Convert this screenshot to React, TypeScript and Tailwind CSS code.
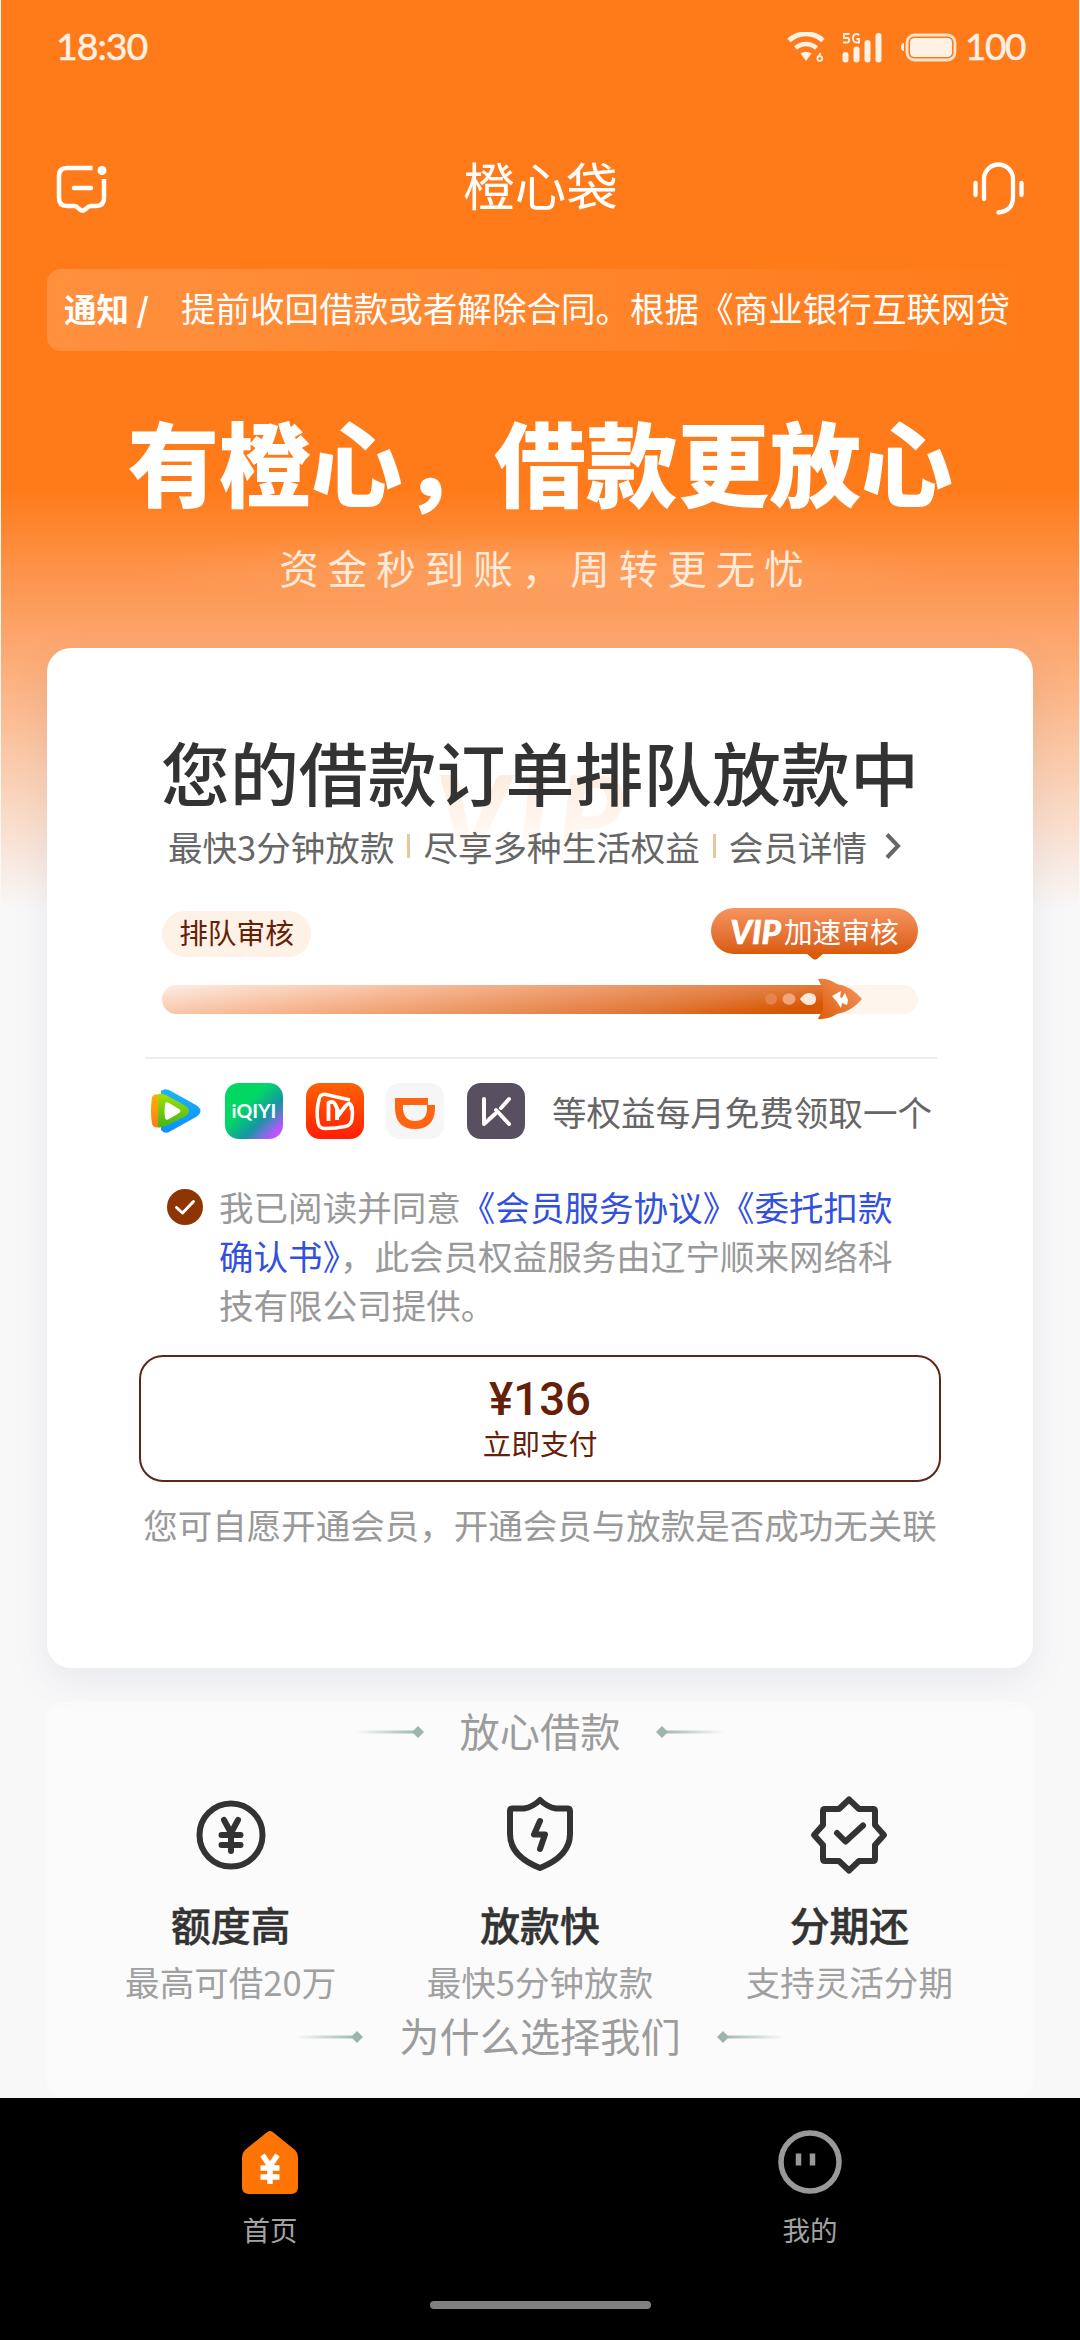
import type { ReactNode } from 'react';

const StatusBar = () => (
  <div className="flex h-[94px] items-center justify-between pl-[55px] pr-[54px] font-['Lato','Noto_Sans_CJK_SC',sans-serif] text-[#fff1e4]">
    <span className="text-[37.500px] leading-[92px] tracking-[-1px] -mt-[2px] [-webkit-text-stroke:0.500px_#fff1e4]">18:30</span>
    <div className="flex items-center">
      <svg width="38" height="30" viewBox="0 0 38 30" fill="none" stroke="#fff1e4">
        <path d="M2 8.500a25 25 0 0 1 34 0" strokeWidth="5" />
        <path d="M8.500 16a15.500 15.500 0 0 1 21 0" strokeWidth="4.500" />
        <path d="M13.500 21.500q5.500-3.500 11 0L19 29z" fill="#fff1e4" stroke="none" />
        <path d="M33.500 21l-2.500 4.500" strokeWidth="1.700" />
        <circle cx="32.800" cy="26.500" r="2.400" strokeWidth="1.700" />
      </svg>
      <svg className="ml-[17px]" width="40" height="31" viewBox="0 0 40 31" fill="#fff1e4">
        <path d="M7.500 2H2v4h3.200q2 0 2 2.200T5 10.500H1M17 3.500Q16.500 2 14.500 2 11 2 11 6.200t3.500 4.300H17V7h-2.500" fill="none" stroke="#fff1e4" strokeWidth="1.900" />
        <rect x="0.500" y="20" width="6" height="10.500" rx="3" />
        <rect x="11.500" y="14.500" width="6" height="16" rx="3" />
        <rect x="22.500" y="8" width="6" height="22.500" rx="3" />
        <rect x="33.500" y="1" width="6" height="29.500" rx="3" />
      </svg>
      <svg className="ml-[19px]" width="56" height="29" viewBox="0 0 56 29">
        <path d="M3 10v8Q0 18 0 14t3-4z" fill="#fff1e4" />
        <rect x="6" y="2" width="48" height="25" rx="7.500" fill="none" stroke="#ffe3cb" strokeWidth="2.800" />
        <rect x="9" y="5" width="42" height="19" rx="4.500" fill="#fff1e4" />
      </svg>
      <span className="-mt-[2px] ml-[8px] text-[37px] leading-[92px] tracking-[-1.500px] [-webkit-text-stroke:0.500px_#fff1e4]">100</span>
    </div>
  </div>
);

const TopBar = () => (
  <div className="flex h-[184px] items-center justify-between pt-[3px] pl-[54px] pr-[53px] text-white">
    <svg width="54" height="54" viewBox="0 0 54 54" fill="none" stroke="white" strokeWidth="4.500" strokeLinecap="round" strokeLinejoin="round">
      <path d="M37.500 7H12q-8 0-8 8v22q0 8 8 8h7q2.500 0 4 2l2 1.500q2.500 2.500 5 0l2-1.500q1.500-2 4-2h5q8 0 8-8V18" strokeLinecap="butt" />
      <path d="M19 27h17" />
      <circle cx="47" cy="9.500" r="4.500" fill="white" stroke="none" />
    </svg>
    <h1 className="mb-[8px] text-[51.500px] leading-[74px]">橙心袋</h1>
    <svg width="54" height="58" viewBox="0 0 54 58" fill="none" stroke="white" strokeWidth="4.300" strokeLinecap="round">
      <path d="M12 40V20a14.500 14.500 0 0 1 29 0v18q0 14-14.500 15.500M3.500 24v12M49.500 24v12" />
    </svg>
  </div>
);

const Notice = () => (
  <div className="mx-[46px] -mt-[9px] flex h-[82px] items-center overflow-hidden rounded-[14px] bg-linear-to-r from-white/16 to-white/0 pb-[4px] pl-[17px] whitespace-nowrap text-white">
    <span className="text-[32.500px] font-bold">通知 /</span>
    <span className="ml-[32px] text-[34.560px]">提前收回借款或者解除合同。根据《商业银行互联网贷</span>
  </div>
);

const Rocket = () => (
  <svg className="absolute top-[-8px] left-[598px]" width="104" height="44" viewBox="0 0 104 44">
    <defs>
      <linearGradient id="rocket" x1="0" y1="1" x2="1" y2="0">
        <stop offset="0" stopColor="#dd5f0c" />
        <stop offset="1" stopColor="#f59761" />
      </linearGradient>
    </defs>
    <ellipse cx="11" cy="22" rx="6" ry="5.500" fill="#e5854b" />
    <ellipse cx="29" cy="22" rx="6.500" ry="5.800" fill="#f0a67c" />
    <path d="M40 22q4-6 9-6 7 0 7 6t-7 6q-5 0-9-6z" fill="#fde9db" />
    <path d="M58 2q10-1 19 5 14 2 25 15-11 13-25 15-9 6-19 5 2-5 5-8V10q-3-3-5-8z" fill="url(#rocket)" />
    <path d="M72 19l9-5-1 6 2 1 3-5 3 7-1 5-5-2-1 5-4-6z" fill="white" />
  </svg>
);

const Progress = () => (
  <div className="relative mt-[28px] ml-[115px] h-[29px] w-[756px] rounded-full bg-[#fef5ec]">
    <div className="h-full w-[662px] rounded-l-full bg-[linear-gradient(172deg,#fdeee4_0%,#f6b590_35%,#e27a3c_75%,#d75803_92%)]" />
    <Rocket />
  </div>
);

const Apps = () => (
  <div className="flex h-[58px] items-center">
    <svg className="relative left-[2px]" width="58" height="58" viewBox="0 0 58 58">
      <defs>
        <linearGradient id="tv1" x1="0" y1="0" x2="0" y2="1"><stop stopColor="#1bb4fb" /><stop offset="1" stopColor="#0e8dff" /></linearGradient>
        <linearGradient id="tv2" x1="0" y1="0" x2="0" y2="1"><stop stopColor="#ffb102" /><stop offset="1" stopColor="#fb7c1a" /></linearGradient>
        <linearGradient id="tv3" x1="0" y1="0" x2="0" y2="1"><stop stopColor="#a5e000" /><stop offset="1" stopColor="#41b51e" /></linearGradient>
      </defs>
      <path d="M14 9q3-3 8-1l27 15q9 6 0 12L22 50q-5 2-8-2z" fill="url(#tv1)" />
      <path d="M5 15q3-5 9-1v31q-7 2-9-3-2-13 0-27z" fill="url(#tv2)" />
      <path d="M11 12q4-1 8 1l20 11q6 5 0 10L19 44q-4 2-8 1z" fill="url(#tv3)" />
      <path d="M18 22q1-3 4-1l10 6q3 2 0 4l-10 6q-3 2-4-1-1-7 0-14z" fill="white" />
    </svg>
    <div className="ml-[22px] flex h-[56px] w-[58px] items-center justify-center rounded-[14px] bg-[linear-gradient(135deg,#00d95f_0%,#00d865_38%,#1696a5_65%,#bb55ff_88%)] font-['Lato',sans-serif] text-[19.500px] font-bold text-white">
      iQIYI
    </div>
    <svg className="ml-[23px]" width="58" height="56" viewBox="0 0 58 56" fill="none" stroke="white">
      <defs>
        <linearGradient id="mg" x1="0" y1="0" x2="0" y2="1"><stop stopColor="#ff6200" /><stop offset="1" stopColor="#ff1e05" /></linearGradient>
      </defs>
      <rect width="58" height="56" rx="14" fill="url(#mg)" stroke="none" />
      <path d="M44 17L20 11.500q-6-1-7 5-3 11-1 23 1 6 7 6 11 0 20-2 6-1 7-7 1-6 0-13" strokeWidth="3.500" />
      <path d="M22.500 38V20q5-3 7 2l4 9 6-8q5-5 6 1v3M31 37V24" strokeWidth="3.800" />
    </svg>
    <svg className="ml-[22px]" width="58" height="56" viewBox="0 0 58 56">
      <rect width="58" height="56" rx="14" fill="#f7f6f6" />
      <path d="M9 15h33v7h7v4q-1 20-20 20T9 26zM17 22v4q1 12 12 12t12-11v-5z" fill="#ff6413" fillRule="evenodd" />
    </svg>
    <svg className="ml-[23px]" width="58" height="56" viewBox="0 0 58 56" fill="none" stroke="white" strokeWidth="4" strokeLinecap="round">
      <rect width="58" height="56" rx="14" fill="#584f60" stroke="none" />
      <path d="M17 16v25l11-10M34 25l8-9M42 41L29 27" strokeLinejoin="round" />
    </svg>
    <span className="ml-[27px] text-[34.560px] leading-[50px] whitespace-nowrap text-[#666]">等权益每月免费领取一个</span>
  </div>
);

const LoanCard = () => (
  <div className="relative mx-[46px] h-[1020px] rounded-[24px] bg-white pt-[88px] shadow-[0_12px_36px_rgba(90,100,140,0.10)]">
    <div className="absolute top-[116px] left-[388px] bg-linear-to-b from-[#fdeadb] via-[#fff4ec] to-white bg-clip-text pr-[20px] font-['Lato',sans-serif] text-[112px] leading-[100px] font-black tracking-[8px] text-transparent italic">
      VIP
    </div>
    <div className="relative">
      <h2 className="ml-[114px] text-[68.900px] leading-[70px] font-medium whitespace-nowrap text-[#333]">您的借款订单排队放款中</h2>
      <div className="mt-[15px] ml-[121px] flex h-[50px] items-center text-[34.560px] leading-[50px] whitespace-nowrap text-[#666]">
        <span>最快3分钟放款</span>
        <i className="mx-[13px] h-[24px] w-[3px] bg-[#eac6a0]" />
        <span>尽享多种生活权益</span>
        <i className="mx-[13px] h-[24px] w-[3px] bg-[#eac6a0]" />
        <span>会员详情</span>
        <svg className="ml-[17px]" width="18" height="26" viewBox="0 0 18 26" fill="none" stroke="#666" strokeWidth="4">
          <path d="M3 1.500L14 13 3 24.500" />
        </svg>
      </div>
      <div className="mt-[37px] mr-[115px] ml-[115px] flex items-start justify-between">
        <div className="mt-[3px] h-[46px] w-[149px] rounded-full bg-[#fef1e6] text-center text-[28.700px] leading-[42px] text-[#642108]">排队审核</div>
        <div className="relative flex h-[46px] w-[207px] items-center justify-center rounded-full bg-linear-to-b from-[#f5955e] to-[#da5a05] text-white">
          <span className="mr-[3px] font-['Lato',sans-serif] text-[33px] leading-[46px] font-black italic [-webkit-text-stroke:0.600px_white]">VIP</span>
          <span className="text-[28.700px] leading-[44px]">加速审核</span>
          <svg className="absolute top-[45px] left-[95px]" width="18" height="7" viewBox="0 0 18 7">
            <path d="M0 0h18l-7 6q-2 1-4 0z" fill="#da5a05" />
          </svg>
        </div>
      </div>
      <Progress />
      <div className="mt-[43px] ml-[98px] h-[2px] w-[792px] bg-[#ededed]" />
      <div className="mt-[23px] ml-[98px]">
        <Apps />
      </div>
      <div className="mt-[42px] ml-[120px] flex">
        <svg className="mt-[7px]" width="36" height="36" viewBox="0 0 36 36">
          <circle cx="18" cy="18" r="18" fill="#8f3503" />
          <path d="M9.500 18.500l6 5.500 11-11.500" fill="none" stroke="white" strokeWidth="3" strokeLinecap="round" strokeLinejoin="round" />
        </svg>
        <p className="ml-[16px] w-[676px] text-[34.560px] leading-[49px] text-[#999]">
          我已阅读并同意<span className="text-[#3350dc]">《会员服务协议》《委托扣款确认书》</span>，此会员权益服务由辽宁顺来网络科技有限公司提供。
        </p>
      </div>
      <button className="mt-[26px] ml-[92px] flex h-[127px] w-[802px] flex-col items-center rounded-[24px] border-2 border-[#5f2613] pt-[18px] text-[#642108]">
        <span className="font-['Roboto',sans-serif] text-[45.500px] leading-[50px] font-medium">¥136</span>
        <span className="text-[28.700px] leading-[36px]">立即支付</span>
      </button>
      <p className="mt-[17px] text-center text-[34.500px] leading-[50px] whitespace-nowrap text-[#999]">您可自愿开通会员，开通会员与放款是否成功无关联</p>
    </div>
  </div>
);

const SectionTitle = ({ children }: { children: ReactNode }) => (
  <div className="flex h-[60px] items-center justify-center gap-[35px]">
    <svg width="69" height="14" viewBox="0 0 69 14">
      <defs>
        <linearGradient id="tail"><stop stopColor="#9db5ae" stopOpacity="0" /><stop offset="1" stopColor="#9db5ae" /></linearGradient>
      </defs>
      <rect y="5.500" width="62" height="3" fill="url(#tail)" />
      <path d="M62 1l6 6-6 6-6-6z" fill="#9db5ae" />
    </svg>
    <span className="mb-[4px] text-[40.200px] leading-[56px] text-[#9c9c9c]">{children}</span>
    <svg className="-scale-x-100" width="69" height="14" viewBox="0 0 69 14">
      <rect y="5.500" width="62" height="3" fill="url(#tail)" />
      <path d="M62 1l6 6-6 6-6-6z" fill="#9db5ae" />
    </svg>
  </div>
);

const features = [
  {
    title: '额度高',
    desc: '最高可借20万',
    icon: (
      <>
        <circle cx="40" cy="40" r="31.500" strokeWidth="6" />
        <path d="M33 25l7 13 7-13M40 38v18M30.500 40h19M30.500 50h19" strokeWidth="6" />
      </>
    ),
  },
  {
    title: '放款快',
    desc: '最快5分钟放款',
    icon: (
      <>
        <path d="M40 5q7 7 16 8.500h12q2 0 2 3V39q0 22-30 34Q10 61 10 39V16.500q0-3 2-3h12Q33 12 40 5z" strokeWidth="6" />
        <path d="M40 26l-6 13.500h11L40 54" strokeWidth="6" />
      </>
    ),
  },
  {
    title: '分期还',
    desc: '支持灵活分期',
    icon: (
      <>
        <path d="M40 4.500L50 14h14q2 0 2 2v14l9 10-9 10v14q0 2-2 2H50l-10 9.500L30 66H16q-2 0-2-2V50L5 40l9-10V16q0-2 2-2h14z" strokeWidth="6" />
        <path d="M28 38l8.500 8.500L54 30.500" strokeWidth="6" />
      </>
    ),
  },
];

const Features = () => (
  <div className="mx-[46px] mt-[35px] h-[395px] rounded-[16px] bg-[#fbfbfb]">
    <div className="-mt-px">
      <SectionTitle>放心借款</SectionTitle>
    </div>
    <div className="mt-[33px] mb-[-1px] grid grid-cols-3 px-[29px]">
      {features.map((f) => (
        <div key={f.title} className="flex flex-col items-center whitespace-nowrap">
          <svg width="80" height="80" viewBox="0 0 80 80" fill="none" stroke="#333" strokeLinecap="round" strokeLinejoin="round">
            {f.icon}
          </svg>
          <span className="mt-[19px] text-[39.800px] leading-[60px] font-medium text-[#333] [-webkit-text-stroke:0.500px_#333]">{f.title}</span>
          <span className="text-[34.560px] leading-[54px] text-[#a0a0a0]">{f.desc}</span>
        </div>
      ))}
    </div>
    <SectionTitle>为什么选择我们</SectionTitle>
  </div>
);

const TabBar = () => (
  <div className="flex h-[242px] flex-col bg-black">
    <div className="grid grid-cols-2 pt-[32px] text-[27.500px] leading-[40px] text-[#a3a3a3]">
      <div className="flex flex-col items-center">
        <svg width="64" height="64" viewBox="0 0 64 64">
          <path d="M28 3q4-4 8 0l21 17q3 3 3 7v30q0 7-7 7H11q-7 0-7-7V27q0-4 3-7z" fill="#ff7403" />
          <path d="M24.500 25l7.500 11 7.500-11M32 35v19M22.500 38h19M22.500 47h19" fill="none" stroke="white" strokeWidth="5.500" />
        </svg>
        <span className="mt-[15px]">首页</span>
      </div>
      <div className="flex flex-col items-center">
        <svg width="64" height="64" viewBox="0 0 64 64" fill="none" stroke="#999">
          <circle cx="32" cy="32" r="29" strokeWidth="5.500" />
          <path d="M20.500 23.500v12M34.500 23.500v12" strokeWidth="5.500" />
        </svg>
        <span className="mt-[15px]">我的</span>
      </div>
    </div>
    <div className="mx-auto mt-auto mb-[31px] h-[8px] w-[221px] rounded-full bg-[#808080]" />
  </div>
);

export default function App() {
  return (
    <div className="h-[2340px] w-[1080px] overflow-hidden bg-[#f8f8f9] font-['Noto_Sans_CJK_SC',sans-serif]">
      <div className="h-[2098px] border-x border-[#f8f8f9] bg-[linear-gradient(180deg,#ff7b1a_0px,#ff7b1a_490px,#fd9b5a_600px,#fcb78a_700px,#f8f8f9_910px)]">
        <StatusBar />
        <TopBar />
        <Notice />
        <div className="mt-[55px] h-[124px] text-center text-[91.700px] leading-[108px] font-black whitespace-nowrap text-white">有橙心，借款更放心</div>
        <div className="mx-[120px] h-[76px] bg-[radial-gradient(closest-side,rgba(255,255,255,0.12),transparent)] pl-[12px] text-center text-[39.500px] leading-[73px] tracking-[9px] whitespace-nowrap text-[#ffeadb]">
          资金秒到账，周转更无忧
        </div>
        <div className="h-[42px]" />
        <LoanCard />
        <Features />
      </div>
      <TabBar />
    </div>
  );
}
